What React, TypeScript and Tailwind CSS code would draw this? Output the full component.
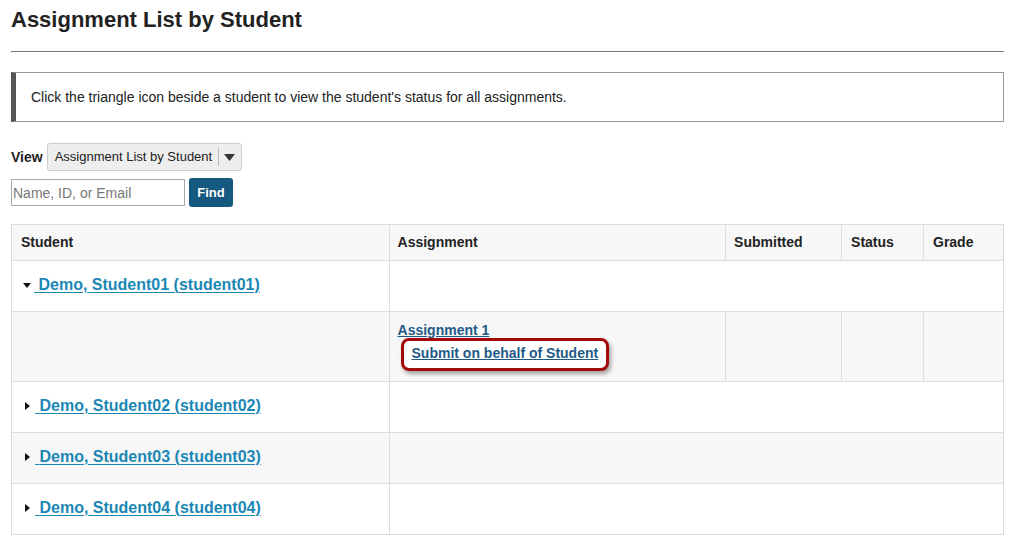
const students = [
  { name: 'Demo, Student01 (student01)', open: true },
  { name: 'Demo, Student02 (student02)', open: false },
  { name: 'Demo, Student03 (student03)', open: false },
  { name: 'Demo, Student04 (student04)', open: false },
];

function Caret({ open }: { open: boolean }) {
  return open ? (
    <svg width="8" height="5" viewBox="0 0 8 5" className="inline-block mr-[3px] align-middle">
      <path d="M0 0h8L4 5z" fill="#111" />
    </svg>
  ) : (
    <svg width="5" height="8" viewBox="0 0 5 8" className="inline-block mr-[5px] ml-[2px] align-middle">
      <path d="M0 0v8l5-4z" fill="#111" />
    </svg>
  );
}

// row backgrounds alternate over every visible row, detail rows included
const stripe = ['bg-white', 'bg-[#f7f7f7]'];

export default function App() {
  let rowIndex = 0;
  return (
    <div className="min-h-screen bg-white px-[11px] pt-[7px] text-[#222]" style={{ fontFamily: '"Liberation Sans", Arial, sans-serif' }}>
      <h1 className="text-[22px] font-bold leading-[26px]">Assignment List by Student</h1>
      <hr className="mt-[18px] border-0 border-t border-[#777]" />

      <div className="mt-[20px] h-[50px] flex items-center border border-[#999] border-l-[5px] border-l-[#555] pl-[15px] text-[14px]">
        Click the triangle icon beside a student to view the student's status for all assignments.
      </div>

      <div className="mt-[21px] flex items-center gap-[4px]">
        <span className="text-[14px] font-bold">View</span>
        <div className="h-[28px] w-[195px] flex items-center bg-[#eee] border border-[#ccc] rounded-[3px] text-[13px]">
          <span className="pl-[7px] pr-[6px]">Assignment List by Student</span>
          <span className="h-[18px] border-l border-[#bbb]" />
          <svg width="11" height="7" viewBox="0 0 11 7" className="ml-[5px]">
            <path d="M0 0h11L5.5 7z" fill="#333" />
          </svg>
        </div>
      </div>

      <div className="mt-[7px] flex items-center gap-[4px]">
        <input
          placeholder="Name, ID, or Email"
          className="h-[27px] w-[174px] border border-[#aaa] px-[1px] text-[14px] placeholder:text-[#777] outline-none"
        />
        <button className="h-[29px] w-[44px] rounded-[3px] bg-[#15597f] text-white text-[13px] font-bold">Find</button>
      </div>

      <table className="mt-[17px] w-[993px] border-collapse text-[14px]">
        <thead>
          <tr className="h-[36px] bg-[#f7f7f7]">
            <th className="w-[378px] border border-[#ddd] px-[9px] text-left font-bold">Student</th>
            <th className="w-[337px] border border-[#ddd] px-[8px] text-left font-bold">Assignment</th>
            <th className="w-[116px] border border-[#ddd] px-[8px] text-left font-bold">Submitted</th>
            <th className="w-[82px] border border-[#ddd] px-[9px] text-left font-bold">Status</th>
            <th className="w-[80px] border border-[#ddd] px-[9px] text-left font-bold">Grade</th>
          </tr>
        </thead>
        <tbody>
          {students.map((s) => {
            const bg = stripe[rowIndex++ % 2];
            const detailBg = s.open ? stripe[rowIndex++ % 2] : '';
            return (
              <>
                <tr key={s.name} className={`h-[51px] ${bg}`}>
                  <td className="border border-[#ddd] pl-[11px] pb-[3px] text-[16px] font-bold">
                    <Caret open={s.open} />
                    <a href="#" className="text-[#1a87b5] underline underline-offset-[2px] decoration-1">
                      {'\u00a0'}{s.name}
                    </a>
                  </td>
                  <td colSpan={4} className="border border-[#ddd]" />
                </tr>
                {s.open && (
                  <tr key={s.name + '-detail'} className={`h-[70px] ${detailBg}`}>
                    <td className="border border-[#ddd]" />
                    <td className="border border-[#ddd] px-[8px] align-top pt-[10px]">
                      <a href="#" className="block font-bold text-[#1f5a87] underline leading-[16px]">Assignment 1</a>
                      <span className="relative inline-block ml-[3px] px-[8px] pt-[2px] pb-[4px] border-[3px] border-[#a30b0b] rounded-[8px] bg-white shadow-[2px_3px_4px_rgba(0,0,0,0.35)]">
                        <a href="#" className="font-bold text-[#1f5a87] underline leading-[17px]">Submit on behalf of Student</a>
                      </span>
                    </td>
                    <td className="border border-[#ddd]" />
                    <td className="border border-[#ddd]" />
                    <td className="border border-[#ddd]" />
                  </tr>
                )}
              </>
            );
          })}
        </tbody>
      </table>
    </div>
  );
}
